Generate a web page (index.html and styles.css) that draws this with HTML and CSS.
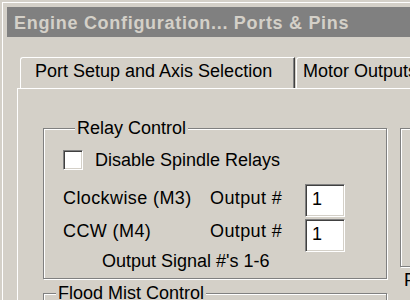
FILE: index.html
```html
<!DOCTYPE html>
<html lang="en">
<head>
  <meta charset="UTF-8">
  <meta name="viewport" content="width=device-width, initial-scale=1.0">
  <title>Engine Configuration... Ports &amp; Pins</title>
  <link rel="stylesheet" href="styles.css">
</head>
<body>
  <div class="window">
    <!-- title bar (inactive) -->
    <div class="titlebar">Engine Configuration... Ports &amp; Pins</div>

    <div class="dialog">
      <!-- tabs -->
      <div class="tabs">
        <div class="tab active">Port Setup and Axis Selection</div>
        <div class="tab">Motor Outputs</div>
      </div>

      <div class="panel">
        <div class="col_left">
          <div class="group relay">
            <div class="group_label">Relay Control</div>
            <div class="check_row">
              <span class="checkbox"></span>
              <span>Disable Spindle Relays</span>
            </div>
            <div class="outputs">
              <div class="cell">Clockwise (M3)</div>
              <div class="cell">Output #</div>
              <div class="field">1</div>
              <div class="cell second">CCW (M4)</div>
              <div class="cell second">Output #</div>
              <div class="field">1</div>
            </div>
            <div class="signal">Output Signal #'s 1-6</div>
          </div>

          <div class="group flood">
            <div class="group_label">Flood Mist Control</div>
          </div>
        </div>

        <div class="col_right">
          <div class="group side"></div>
          <div class="side_text">F</div>
        </div>
      </div>
    </div>
  </div>
</body>
</html>
```

FILE: styles.css
```css
* {
  box-sizing: border-box;
  margin: 0;
}
body {
  background: #d4d0c8;
  font-family: "Liberation Sans", Arial, sans-serif;
  font-size: 18px;
  color: #000;
  overflow: hidden;
  height: 300px;
}

.window {
  margin: 2px 0 0 2px;
  border-top: 1px solid #fff;
  border-left: 1px solid #fff;
  padding: 4px 0 0 4px;
  height: 298px;
  overflow: hidden;
}

.titlebar {
  background: #808080;
  color: #d4d0c8;
  font-weight: bold;
  letter-spacing: 0.7px;
  height: 30px;
  line-height: 20px;
  padding: 6px 0 0 7px;
  white-space: nowrap;
}

.dialog {
  padding: 20px 0 0 10px;
}

/* tabs */
.tabs {
  display: flex;
  padding-left: 3px;
  white-space: nowrap;
}
.tab {
  flex-shrink: 0;
  height: 31px;
  line-height: 20px;
  padding: 3px 10px 0 6px;
  border-top: 1px solid #fff;
  border-left: 1px solid #fff;
  border-top-left-radius: 3px;
}
.tab.active {
  width: 275px;
  padding-left: 14px;
  border-right: 1px solid #404040;
  box-shadow: inset -1px 0 #808080;
}
.tab + .tab {
  margin-left: 1px;
}

.panel {
  display: flex;
  gap: 13px;
  border-top: 1px solid #fff;
  border-left: 1px solid #fff;
  padding: 39px 0 0 25px;
  height: 212px;
  overflow: hidden;
}

/* etched group boxes */
.group {
  display: flex;
  flex-direction: column;
  border: 1px solid #808080;
  box-shadow: inset 1px 1px #fff, 1px 1px #fff;
}
.group_label {
  align-self: flex-start;
  background: #d4d0c8;
  line-height: 20px;
  margin: -11px 0 0 12px;
  padding: 0 2px;
}

.col_left {
  width: 344px;
  flex-shrink: 0;
}
.relay {
  height: 151px;
  padding-left: 19px;
}
.check_row {
  display: flex;
  align-items: center;
  gap: 12px;
  margin-top: 12px;
  height: 20px;
  line-height: 20px;
}
.checkbox {
  width: 20px;
  height: 20px;
  background: #fff;
  border: 1px solid;
  border-color: #808080 #fff #fff #808080;
  box-shadow: inset 1px 1px #404040, inset -1px -1px #d4d0c8;
}

.outputs {
  display: grid;
  grid-template-columns: 147px 95px 40px;
  grid-template-rows: 33px 33px;
  row-gap: 2px;
  margin-top: 14px;
  letter-spacing: 0.4px;
}
.cell {
  line-height: 20px;
  padding-top: 4px;
}
.cell.second {
  padding-top: 2px;
}
.field {
  background: #fff;
  border: 1px solid;
  border-color: #808080 #fff #fff #808080;
  box-shadow: inset 1px 1px #404040, inset -1px -1px #d4d0c8;
  line-height: 20px;
  padding: 4px 0 0 6px;
}

.signal {
  line-height: 20px;
  margin: -1px 0 0 39px;
}

.flood {
  margin-top: 14px;
  height: 60px;
}

.col_right {
  flex: 1;
  flex-shrink: 0;
}
.side {
  height: 139px;
  border-right: none;
}
.side_text {
  line-height: 20px;
  margin: 3px 0 0 4px;
}
```
